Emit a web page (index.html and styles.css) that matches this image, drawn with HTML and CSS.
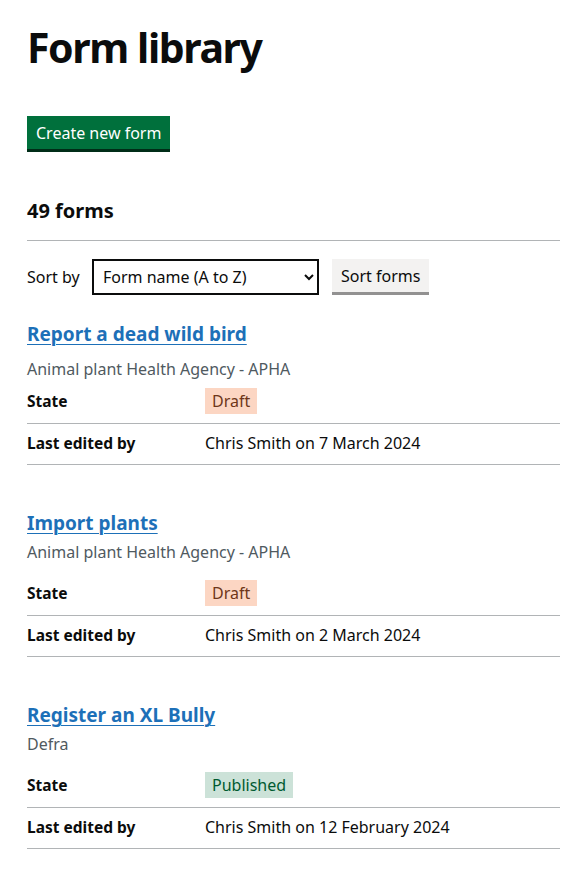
FILE: index.html
```html
<!DOCTYPE html>
<html lang="en">
<head>
<meta charset="utf-8">
<title>Form library</title>
<link rel="stylesheet" href="styles.css">
</head>
<body>
<main class="page">
  <h1 class="title">Form library</h1>
  <div class="actions">
    <a class="btn btn-primary" href="#">Create new form</a>
  </div>
  <h2 class="count">49 forms</h2>
  <hr class="divider">
  <form class="sort">
    <label class="sort-label" for="sort">Sort by</label>
    <select id="sort" class="select">
      <option>Form name (A to Z)</option>
    </select>
    <button type="button" class="btn btn-secondary">Sort forms</button>
  </form>

  <section class="card card-first">
    <h3 class="card-title"><a href="#">Report a dead wild bird</a></h3>
    <p class="org">Animal plant Health Agency - APHA</p>
    <dl class="summary">
      <div class="row row-state"><dt>State</dt><dd><span class="tag tag-draft">Draft</span></dd></div>
      <div class="row"><dt>Last edited by</dt><dd>Chris Smith on 7 March 2024</dd></div>
    </dl>
  </section>

  <section class="card">
    <h3 class="card-title"><a href="#">Import plants</a></h3>
    <p class="org">Animal plant Health Agency - APHA</p>
    <dl class="summary">
      <div class="row row-state"><dt>State</dt><dd><span class="tag tag-draft">Draft</span></dd></div>
      <div class="row"><dt>Last edited by</dt><dd>Chris Smith on 2 March 2024</dd></div>
    </dl>
  </section>

  <section class="card">
    <h3 class="card-title"><a href="#">Register an XL Bully</a></h3>
    <p class="org">Defra</p>
    <dl class="summary">
      <div class="row row-state"><dt>State</dt><dd><span class="tag tag-published">Published</span></dd></div>
      <div class="row"><dt>Last edited by</dt><dd>Chris Smith on 12 February 2024</dd></div>
    </dl>
  </section>
</main>
</body>
</html>
```

FILE: styles.css
```css
* { box-sizing: border-box; }
html, body { margin: 0; padding: 0; background: #fff; }
body {
  font-family: "Noto Sans", "Liberation Sans", Arial, sans-serif;
  color: #0b0c0c;
  font-size: 16px;
  line-height: 20px;
}
.page {
  padding: 0 14px 0 27px;
  width: 574px;
}
.title {
  font-size: 41px;
  font-weight: 700;
  line-height: 45px;
  margin: 0;
  padding-top: 25px;
  letter-spacing: -1.4px;
}
.actions {
  display: flex;
  margin-top: 46px;
}
.btn {
  display: block;
  font-family: inherit;
  font-size: 16px;
  line-height: 19px;
  border: 0;
  border-radius: 0;
  text-decoration: none;
  cursor: pointer;
}
.btn-primary {
  background: #00703c;
  color: #fff;
  padding: 8px 9px 6px;
  box-shadow: 0 3px 0 #002d18;
}
.count {
  font-size: 20px;
  font-weight: 700;
  margin: 49px 0 0;
  line-height: 25px;
}
.divider {
  border: 0;
  border-top: 1px solid #b1b4b6;
  margin: 17px 0 0;
  height: 0;
}
.sort {
  display: flex;
  align-items: center;
  margin-top: 18px;
}
.sort-label {
  font-size: 16px;
  width: 65px;
}
.select {
  width: 227px;
  height: 36px;
  border: 2px solid #0b0c0c;
  border-radius: 0;
  background: #fff;
  font-family: inherit;
  font-size: 16px;
  padding: 0 5px;
  color: #0b0c0c;
  margin-right: 13px;
}
.btn-secondary {
  align-self: flex-start;
  background: #f3f2f1;
  color: #0b0c0c;
  padding: 8px 9px 6px;
  box-shadow: 0 3px 0 #929191;
}
.card { margin-top: 27px; }
.card + .card { margin-top: 46px; }
.card-title {
  margin: 0;
  font-size: 19px;
  font-weight: 700;
  line-height: 25px;
}
.card-title a {
  color: #1d70b8;
  text-decoration: underline;
  text-decoration-thickness: 1px;
  text-underline-offset: 3px;
}
.org {
  margin: 6px 0 0;
  color: #505a5f;
  font-size: 16px;
  line-height: 20px;
}
.card-first .org { margin-top: 12px; }
.summary { margin: 10px 0 0; }
.card-first .summary { margin-top: 1px; }
.row {
  display: flex;
  align-items: baseline;
  border-bottom: 1px solid #b1b4b6;
  padding: 9px 0 11px;
}
.row-state { padding: 8px 0 9px; }
.row dt {
  width: 178px;
  flex: none;
  font-weight: 700;
  font-size: 15.5px;
  margin: 0;
}
.row dd { margin: 0; }
.tag {
  display: inline-block;
  padding: 3px 7px;
  font-size: 16px;
  line-height: 20px;
}
.tag-draft { background: #fcd6c3; color: #6e3619; }
.tag-published { background: #cce2d8; color: #005a30; }
```
